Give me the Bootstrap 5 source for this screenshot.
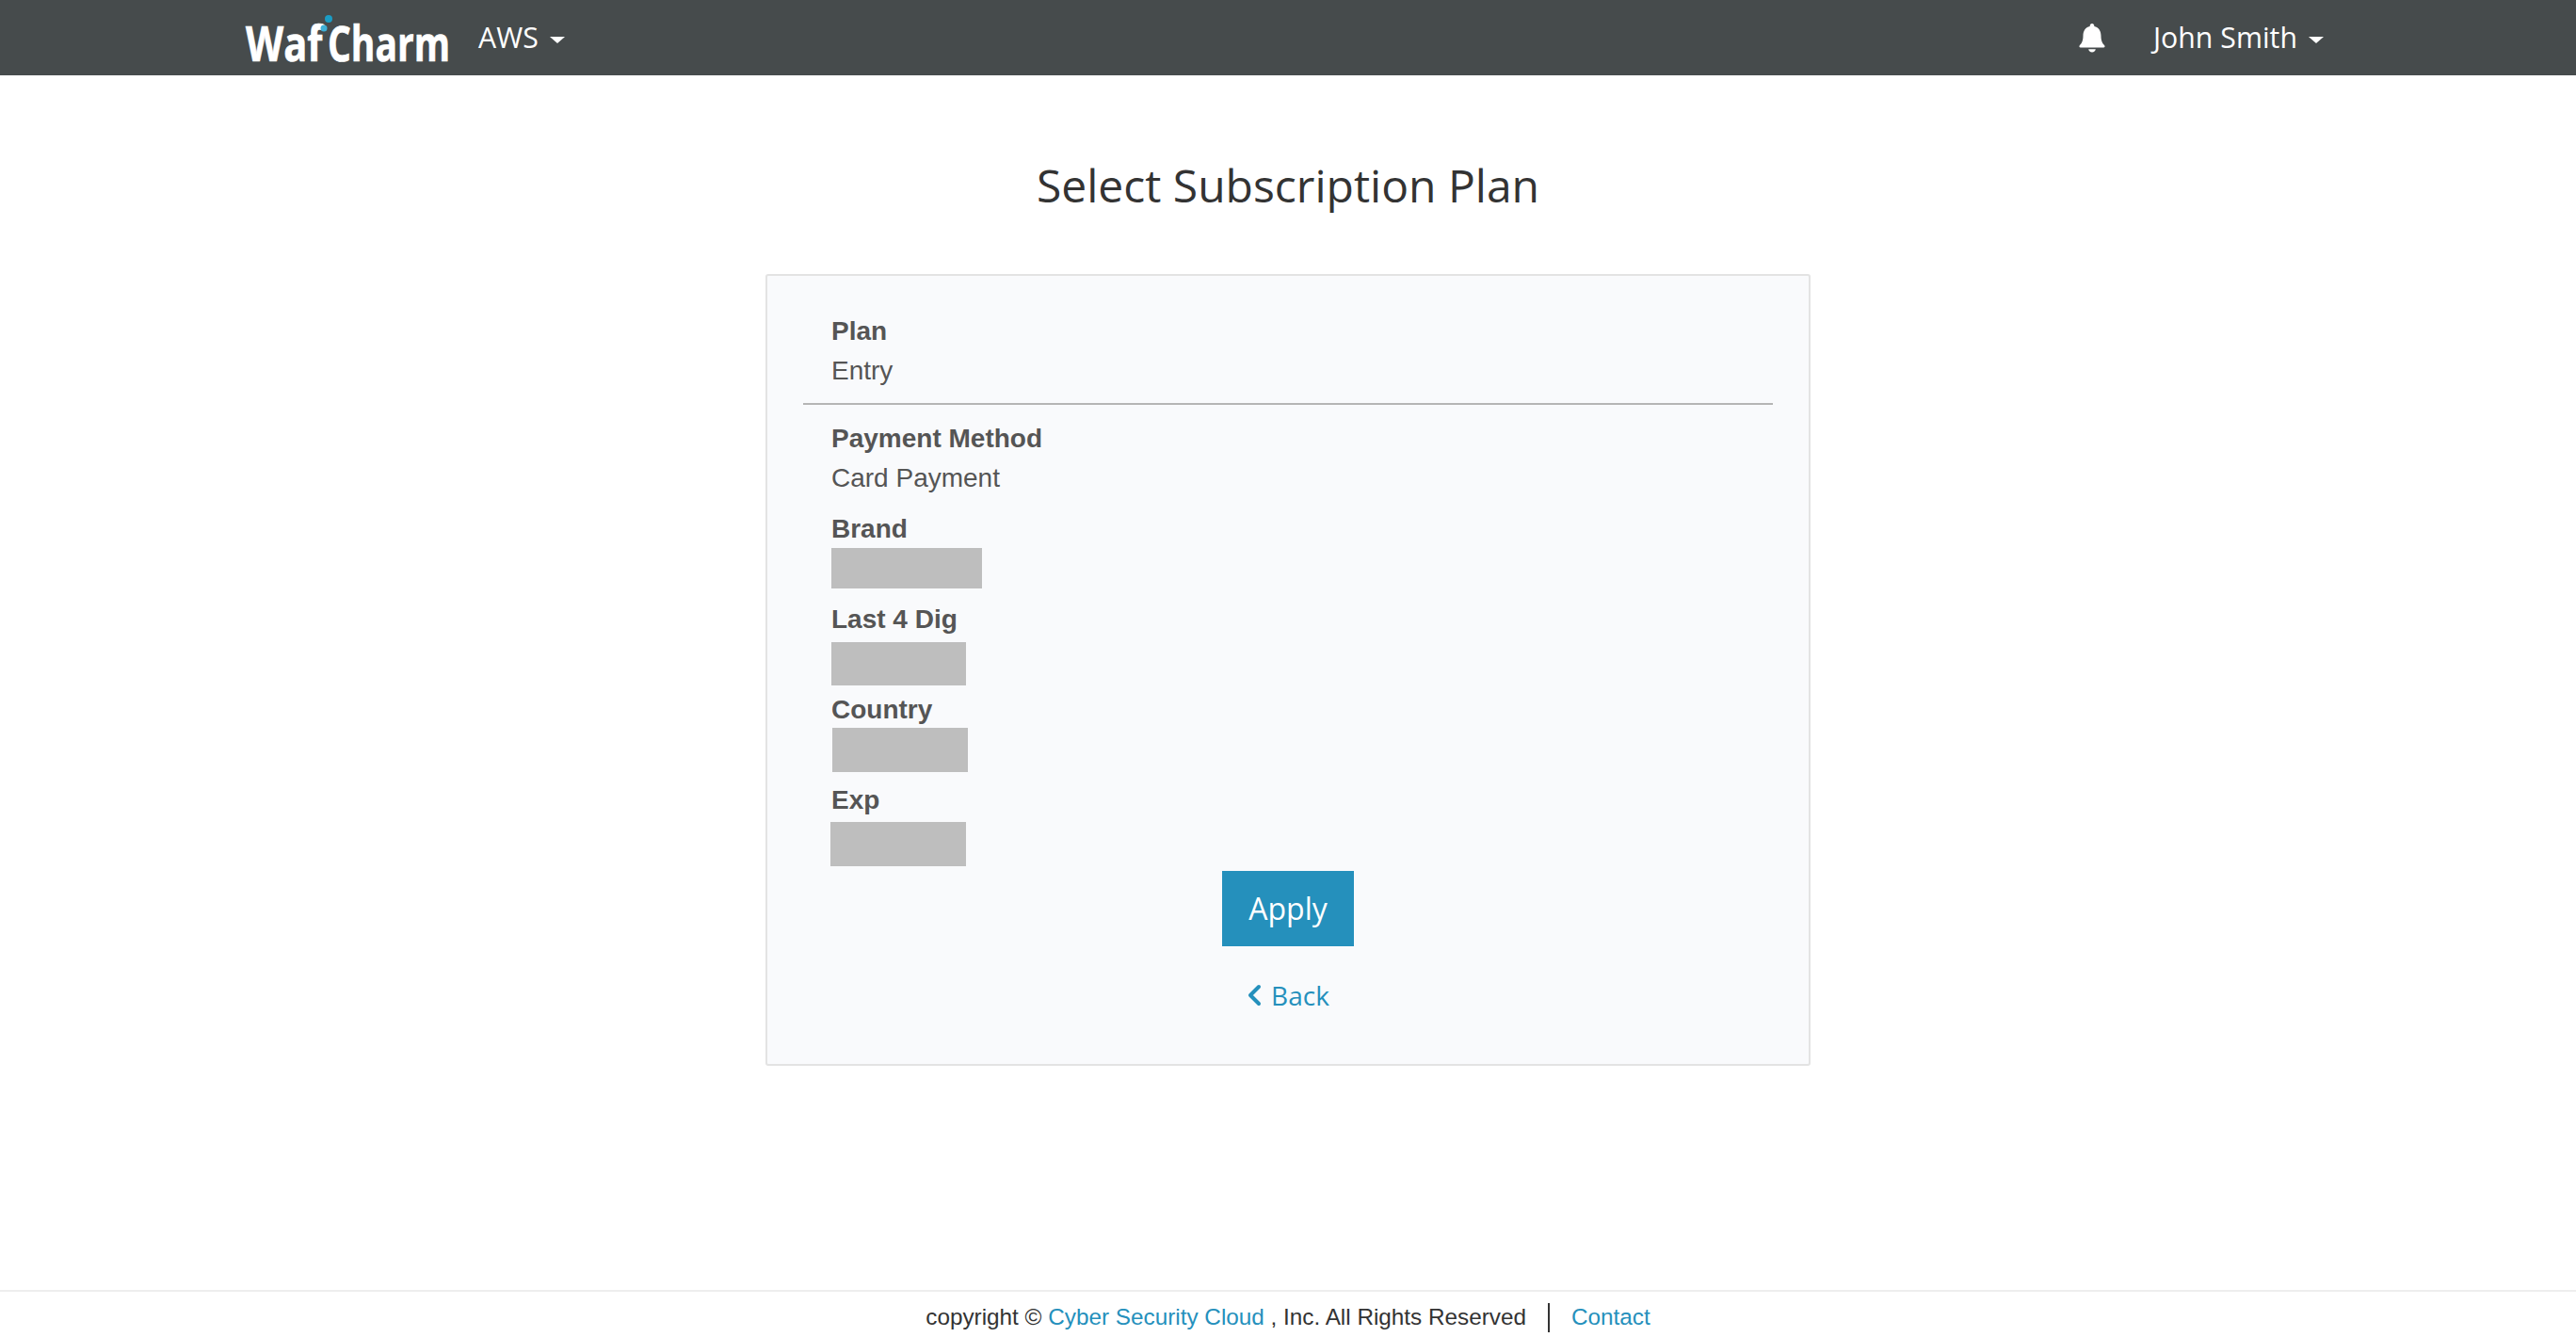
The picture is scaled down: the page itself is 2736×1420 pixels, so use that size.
<!DOCTYPE html>
<html lang="en">
<head>
    <meta charset="UTF-8">
    <meta name="viewport" content="width=device-width, initial-scale=1.0">
    <title>Select Subscription Plan - WafCharm</title>
    <link href="https://cdn.jsdelivr.net/npm/bootstrap@5.3.2/dist/css/bootstrap.min.css" rel="stylesheet">
    <style>
        body {
            font-family: "Liberation Sans", Arial, sans-serif;
            background-color: #fff;
        }
        .top-bar {
            height: 80px;
            background-color: #464b4c;
            padding: 0 268px 0 260px;
        }
        .top-bar .nav-link {
            font-family: "Open Sans", sans-serif;
            font-size: 30.3px;
            line-height: 40px;
            color: #fff;
            padding: 0;
        }
        .top-bar .dropdown-toggle::after {
            margin-left: 12px;
            vertical-align: 5px;
            border-top-width: 7px;
            border-left-width: 8px;
            border-right-width: 8px;
        }
        .logo-mark {
            display: block;
            width: 218px;
            height: 80px;
            margin-right: 30px;
        }
        .logo-mark text {
            font-family: "Open Sans", sans-serif;
            font-weight: 700;
            font-size: 52px;
            fill: #fff;
            stroke: #fff;
            stroke-width: .7px;
        }
        .bell-icon {
            width: 30px;
            height: 32px;
            margin-right: 50px;
        }
        .page-title {
            font-family: "Open Sans", sans-serif;
            font-size: 48px;
            line-height: 64px;
            font-weight: 400;
            color: #333;
            text-align: center;
            margin: 85px 0 62px;
        }
        .plan-panel {
            width: 1110px;
            height: 841px;
            margin: 0 auto;
            padding: 38px 38px 0;
            background-color: #f9fafc;
            border: 2px solid #e3e3e3;
            border-radius: 3px;
            color: #555;
            font-size: 28px;
            line-height: 42px;
        }
        .field-block {
            padding: 0 30px;
        }
        .field-label {
            font-weight: 700;
        }
        .panel-rule {
            margin: 13px 0 15px;
            border: 0;
            border-top: 2px solid #b5b5b5;
            opacity: 1;
        }
        .field-gap {
            margin-top: 12px;
        }
        .mask-box {
            background-color: #bebebe;
        }
        .mask-brand { width: 160px; height: 43px; margin-top: -1px; margin-bottom: 12px; }
        .mask-digits { width: 143px; height: 46px; margin-top: 3px; margin-bottom: 5px; }
        .mask-country { width: 144px; height: 47px; margin-top: -2px; margin-bottom: 9px; margin-left: 1px; }
        .mask-exp { width: 144px; height: 47px; margin-top: 2px; margin-left: -1px; }
        .apply-btn {
            width: 140px;
            height: 80px;
            margin-top: 5px;
            padding: 0;
            font-family: "Open Sans", sans-serif;
            font-size: 32px;
            color: #fff;
            background-color: #2590bc;
            border: 0;
            border-radius: 0;
        }
        .apply-btn:hover {
            color: #fff;
            background-color: #1f7fa7;
        }
        .back-link {
            margin-top: 32px;
            font-family: "Open Sans", "Liberation Sans", sans-serif;
            color: #2590bc;
            text-decoration: none;
            line-height: 40px;
        }
        .back-link svg {
            width: 16px;
            height: 24px;
            margin-right: 10px;
        }
        .site-foot {
            height: 50px;
            padding-top: 7px;
            border-top: 2px solid #eee;
            font-size: 24.3px;
            color: #333;
        }
        .site-foot a {
            color: #2590bc;
            text-decoration: none;
        }
        .foot-bar {
            width: 2px;
            height: 31px;
            margin: 0 23px 0 23px;
            background-color: #333;
        }
    </style>
</head>
<body class="d-flex flex-column min-vh-100">
    <nav class="top-bar d-flex align-items-center justify-content-between">
        <div class="d-flex align-items-center">
            <svg class="logo-mark" viewBox="0 0 218 80" role="img" aria-label="WafCharm">
                <text transform="translate(1 65) scale(.8 1)">Waf</text>
                <text transform="translate(88 65) scale(.75 1)">Charm</text>
                <circle cx="89" cy="20" r="4" fill="#1b9cc4"/>
                <circle cx="84" cy="30" r="3.500" fill="#3fb0d6"/>
            </svg>
            <div class="dropdown">
                <a class="nav-link dropdown-toggle" href="#" role="button" data-bs-toggle="dropdown" aria-expanded="false">AWS</a>
                <ul class="dropdown-menu">
                    <li><a class="dropdown-item" href="#">AWS</a></li>
                </ul>
            </div>
        </div>
        <div class="d-flex align-items-center">
            <svg class="bell-icon" viewBox="0 0 30 32" fill="#fff" aria-hidden="true">
                <path d="M15 1c-1.300 0-2.300 1-2.300 2.300v.8C7.800 5.200 5.500 9.200 5.500 14c0 5.500-1.500 8-3.700 10.200-.8.8-.3 2.300 1 2.300h24.400c1.300 0 1.800-1.500 1-2.300C26 22 24.500 19.500 24.500 14c0-4.800-2.300-8.800-7.200-9.900v-.8C17.300 2 16.300 1 15 1z"/>
                <path d="M11.200 28.300h7.600c-.2 1.900-1.800 3.200-3.800 3.200s-3.600-1.300-3.800-3.200z"/>
            </svg>
            <div class="dropdown">
                <a class="nav-link dropdown-toggle" href="#" role="button" data-bs-toggle="dropdown" aria-expanded="false">John Smith</a>
                <ul class="dropdown-menu dropdown-menu-end">
                    <li><a class="dropdown-item" href="#">Sign out</a></li>
                </ul>
            </div>
        </div>
    </nav>

    <main>
        <h1 class="page-title">Select Subscription Plan</h1>
        <div class="plan-panel d-flex flex-column">
            <div class="field-block">
                <div class="field-label">Plan</div>
                <div>Entry</div>
            </div>
            <hr class="panel-rule">
            <div class="field-block">
                <div class="field-label">Payment Method</div>
                <div>Card Payment</div>
                <div class="field-label field-gap">Brand</div>
                <div class="mask-box mask-brand"></div>
                <div class="field-label">Last 4 Dig</div>
                <div class="mask-box mask-digits"></div>
                <div class="field-label">Country</div>
                <div class="mask-box mask-country"></div>
                <div class="field-label">Exp</div>
                <div class="mask-box mask-exp"></div>
            </div>
            <div class="d-flex flex-column align-items-center">
                <button type="button" class="btn apply-btn">Apply</button>
                <a href="#" class="back-link d-flex align-items-center">
                    <svg viewBox="0 0 16 24" fill="none" stroke="currentColor" stroke-width="4" stroke-linecap="round" stroke-linejoin="round" aria-hidden="true"><path d="M13 3 4 12l9 9"/></svg>Back
                </a>
            </div>
        </div>
    </main>

    <footer class="site-foot mt-auto d-flex align-items-center justify-content-center">
        <span>copyright © <a href="#">Cyber Security Cloud</a> , Inc. All Rights Reserved</span>
        <span class="foot-bar"></span>
        <a href="#">Contact</a>
    </footer>

    <script src="https://cdn.jsdelivr.net/npm/bootstrap@5.3.2/dist/js/bootstrap.bundle.min.js"></script>
</body>
</html>
